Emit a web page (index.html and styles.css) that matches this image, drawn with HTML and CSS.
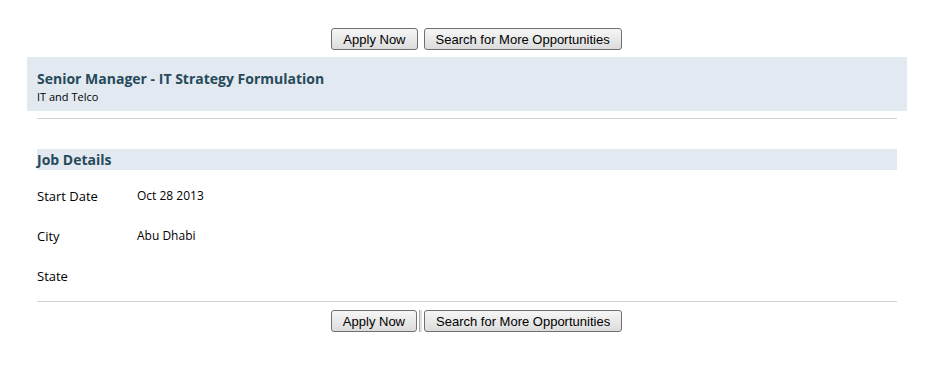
FILE: index.html
```
<!DOCTYPE html>
<html lang="en">
  <head>
    <meta charset="UTF-8" />
    <title>Senior Manager - IT Strategy Formulation</title>
    <link rel="stylesheet" href="styles.css">
  </head>
  <body>
    <div class="page">
      <div class="actions top">
        <button class="btn">Apply Now</button>
        <button class="btn">Search for More Opportunities</button>
      </div>
      <div class="job-head">
        <h1>Senior Manager - IT Strategy Formulation</h1>
        <p>IT and Telco</p>
      </div>
      <div class="body">
        <div class="rule"></div>
        <h2 class="section">Job Details</h2>
        <div class="details">
          <div class="row"><span class="label">Start Date</span><span class="value">Oct 28 2013</span></div>
          <div class="row"><span class="label">City</span><span class="value">Abu Dhabi</span></div>
          <div class="row"><span class="label">State</span><span class="value"></span></div>
        </div>
        <div class="rule bottom"></div>
        <div class="actions low">
          <button class="btn">Apply Now</button><span class="sep"></span><button class="btn">Search for More Opportunities</button>
        </div>
      </div>
    </div>
  </body>
</html>
```
FILE: styles.css
```
* {
  margin: 0;
  padding: 0;
}
body {
  background: #fff;
  color: #000;
  font-family: "Open Sans", "Noto Sans", sans-serif;
}
.page {
  width: 880px;
  margin: 0 0 0 27px;
}
.actions {
  display: flex;
  justify-content: center;
  gap: 6px;
  padding: 0 0 0 19px;
}
.actions.top {
  padding-top: 28px;
  margin-bottom: 7px;
}
.actions.low {
  padding-left: 0;
  margin-left: 19px;
  gap: 1px;
}
.btn {
  height: 22px;
  padding: 0 11px;
  font-family: "Liberation Sans", Arial, sans-serif;
  font-size: 13px;
  color: #000;
  background: linear-gradient(#f6f6f6, #dcdcdc);
  border: solid 1px #707070;
  border-radius: 3px;
}
.actions .sep {
  width: 2px;
  height: 22px;
  margin: 0 1px;
  background: #e0e0e0;
  border-left: solid 1px #a8a8a8;
}
.job-head {
  background: #e3e9f1;
  height: 54px;
  padding: 12px 10px 0;
  box-sizing: border-box;
}
.job-head h1 {
  font-size: 14px;
  font-weight: 700;
  color: #264a5a;
  line-height: 19px;
}
.job-head p {
  font-size: 11px;
  line-height: 17px;
}
.body {
  padding: 0 10px;
}
.rule {
  height: 1px;
  background: #cdd6d3;
  margin-top: 7px;
}
.section {
  margin-top: 30px;
  height: 21px;
  line-height: 21px;
  background: #e3e9f1;
  font-size: 14px;
  font-weight: 700;
  color: #264a5a;
}
.details {
  padding-top: 6px;
}
.row {
  display: flex;
  height: 40px;
  font-size: 12px;
}
.row .label {
  width: 100px;
  padding-top: 11px;
  font-size: 13px;
}
.row .value {
  padding-top: 11px;
}
.rule.bottom {
  margin-top: 5px;
  margin-bottom: 8px;
}
```
